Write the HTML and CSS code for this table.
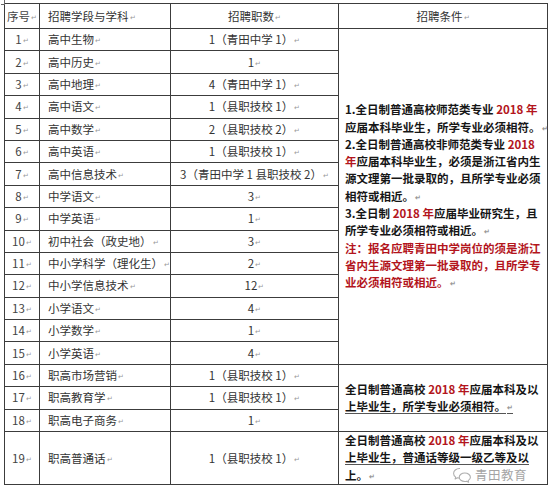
FILE: index.html
```html
<!DOCTYPE html>
<html lang="zh">
<head>
<meta charset="utf-8">
<link rel="stylesheet" href="styles.css">
</head>
<body>
<div class="page">
  <span class="handle"></span>
  <table class="grid">
    <colgroup>
      <col class="c1"><col class="c2"><col class="c3"><col class="c4">
    </colgroup>
    <tr class="head">
      <td class="num">序号<span class="pm">↵</span></td>
      <td class="subj">招聘学段与学科<span class="pm">↵</span></td>
      <td class="cnt">招聘职数<span class="pm">↵</span></td>
      <td class="cnt">招聘条件<span class="pm">↵</span></td>
    </tr>
    <tr>
      <td class="num">1<span class="pm">↵</span></td>
      <td class="subj">高中生物<span class="pm">↵</span></td>
      <td class="cnt">1（青田中学 1）<span class="pm">↵</span></td>
      <td class="cond" rowspan="15">
        <div class="ln">1.全日制普通高校师范类专业 <span class="red">2018 年</span></div>
        <div class="ln">应届本科毕业生，所学专业必须相符。<span class="pm">↵</span></div>
        <div class="ln">2.全日制普通高校非师范类专业 <span class="red">2018</span></div>
        <div class="ln"><span class="red">年</span>应届本科毕业生，必须是浙江省内生</div>
        <div class="ln">源文理第一批录取的，且所学专业必须</div>
        <div class="ln">相符或相近。<span class="pm">↵</span></div>
        <div class="ln">3.全日制 <span class="red">2018 年</span>应届毕业研究生，且</div>
        <div class="ln">所学专业必须相符或相近。<span class="pm">↵</span></div>
        <div class="ln red">注：报名应聘青田中学岗位的须是浙江</div>
        <div class="ln red">省内生源文理第一批录取的，且所学专</div>
        <div class="ln red">业必须相符或相近。<span class="pm">↵</span></div>
      </td>
    </tr>
    <tr><td class="num">2<span class="pm">↵</span></td><td class="subj">高中历史<span class="pm">↵</span></td><td class="cnt">1<span class="pm">↵</span></td></tr>
    <tr><td class="num">3<span class="pm">↵</span></td><td class="subj">高中地理<span class="pm">↵</span></td><td class="cnt">4（青田中学 1）<span class="pm">↵</span></td></tr>
    <tr><td class="num">4<span class="pm">↵</span></td><td class="subj">高中语文<span class="pm">↵</span></td><td class="cnt">1（县职技校 1）<span class="pm">↵</span></td></tr>
    <tr><td class="num">5<span class="pm">↵</span></td><td class="subj">高中数学<span class="pm">↵</span></td><td class="cnt">2（县职技校 2）<span class="pm">↵</span></td></tr>
    <tr><td class="num">6<span class="pm">↵</span></td><td class="subj">高中英语<span class="pm">↵</span></td><td class="cnt">1（县职技校 1）<span class="pm">↵</span></td></tr>
    <tr><td class="num">7<span class="pm">↵</span></td><td class="subj">高中信息技术<span class="pm">↵</span></td><td class="cnt">3（青田中学 1 县职技校 2）<span class="pm">↵</span></td></tr>
    <tr><td class="num">8<span class="pm">↵</span></td><td class="subj">中学语文<span class="pm">↵</span></td><td class="cnt">3<span class="pm">↵</span></td></tr>
    <tr><td class="num">9<span class="pm">↵</span></td><td class="subj">中学英语<span class="pm">↵</span></td><td class="cnt">1<span class="pm">↵</span></td></tr>
    <tr><td class="num">10<span class="pm">↵</span></td><td class="subj">初中社会（政史地）<span class="pm">↵</span></td><td class="cnt">3<span class="pm">↵</span></td></tr>
    <tr><td class="num">11<span class="pm">↵</span></td><td class="subj">中小学科学（理化生）<span class="pm">↵</span></td><td class="cnt">2<span class="pm">↵</span></td></tr>
    <tr><td class="num">12<span class="pm">↵</span></td><td class="subj">中小学信息技术<span class="pm">↵</span></td><td class="cnt">12<span class="pm">↵</span></td></tr>
    <tr><td class="num">13<span class="pm">↵</span></td><td class="subj">小学语文<span class="pm">↵</span></td><td class="cnt">4<span class="pm">↵</span></td></tr>
    <tr><td class="num">14<span class="pm">↵</span></td><td class="subj">小学数学<span class="pm">↵</span></td><td class="cnt">1<span class="pm">↵</span></td></tr>
    <tr><td class="num">15<span class="pm">↵</span></td><td class="subj">小学英语<span class="pm">↵</span></td><td class="cnt">4<span class="pm">↵</span></td></tr>
    <tr>
      <td class="num">16<span class="pm">↵</span></td><td class="subj">职高市场营销<span class="pm">↵</span></td><td class="cnt">1（县职技校 1）<span class="pm">↵</span></td>
      <td class="cond" rowspan="3">
        <div class="ln">全日制普通高校 <span class="red">2018 年</span>应届本科及以</div>
        <div class="ln ul">上毕业生，所学专业必须相符。<span class="pm">↵</span></div>
      </td>
    </tr>
    <tr><td class="num">17<span class="pm">↵</span></td><td class="subj">职高教育学<span class="pm">↵</span></td><td class="cnt">1（县职技校 1）<span class="pm">↵</span></td></tr>
    <tr><td class="num">18<span class="pm">↵</span></td><td class="subj">职高电子商务<span class="pm">↵</span></td><td class="cnt">1<span class="pm">↵</span></td></tr>
    <tr class="tall">
      <td class="num">19<span class="pm">↵</span></td><td class="subj">职高普通话<span class="pm">↵</span></td><td class="cnt">1（县职技校 1）<span class="pm">↵</span></td>
      <td class="cond">
        <div class="ln">全日制普通高校 <span class="red">2018 年</span>应届本科及以</div>
        <div class="ln ul">上毕业生，普通话等级一级乙等及以</div>
        <div class="ln">上。<span class="pm">↵</span></div>
      </td>
    </tr>
  </table>
  <div class="watermark">
    <svg class="wm-icon" viewBox="0 0 24 20" width="20" height="16" aria-hidden="true">
      <path d="M9 2C4.6 2 1.5 4.7 1.5 8c0 1.9 1 3.5 2.6 4.6L3.4 15l2.9-1.5c.9.3 1.8.4 2.7.4" fill="none" stroke="#9a9a9a" stroke-width="1.3" stroke-linecap="round" stroke-linejoin="round"/>
      <path d="M15.5 7.5c-3.9 0-7 2.4-7 5.3s3.1 5.3 7 5.3c.8 0 1.6-.1 2.3-.3l2.5 1.3-.6-2.1c1.7-1 2.8-2.5 2.8-4.2 0-2.9-3.1-5.3-7-5.3z" fill="none" stroke="#9a9a9a" stroke-width="1.3" stroke-linejoin="round"/>
    </svg>
    <span class="wm-text">青田教育</span>
  </div>
</div>
</body>
</html>
```

FILE: styles.css
```css
html, body {
  margin: 0;
  padding: 0;
  background: #ffffff;
}

.page {
  position: relative;
  width: 550px;
  height: 489px;
  padding: 3px 0 0 4px;
  box-sizing: border-box;
  font-family: "Noto Sans CJK SC", "Noto Sans", sans-serif;
}

.handle {
  position: absolute;
  left: 1px;
  top: 0;
  width: 3px;
  height: 4px;
  border-right: 1px solid #666;
  border-bottom: 1px solid #666;
}

.grid {
  border-collapse: collapse;
  table-layout: fixed;
  width: 543px;
  font-size: 11.5px;
  color: #333;
}

.c1 { width: 35px; }
.c2 { width: 131px; }
.c3 { width: 168px; }
.c4 { width: 209px; }

.grid td {
  border: 1px solid #3c3c3c;
  padding: 0;
  height: 21.4px;
  line-height: 14px;
  white-space: nowrap;
  vertical-align: middle;
}

.grid tr.head td {
  height: 24px;
}

.grid tr.tall td {
  height: 52px;
}

.num {
  text-align: center;
  color: #444;
}

.subj {
  padding-left: 8px !important;
  color: #333;
}

.cnt {
  text-align: center;
  color: #333;
}

.pm {
  font-size: 7px;
  color: #999;
  margin-left: 1px;
  vertical-align: 1px;
}

.grid td.cond {
  padding-left: 6px;
  vertical-align: middle;
  font-weight: bold;
  color: #161616;
  line-height: 17.3px;
}

.ln {
  white-space: nowrap;
  height: 17.3px;
}

.red {
  color: #b3151c;
}

.ul {
  text-decoration: underline;
  text-decoration-color: #555;
  text-underline-offset: 2px;
}

.watermark {
  position: absolute;
  left: 452px;
  top: 467px;
  display: flex;
  align-items: center;
  gap: 3px;
  opacity: 0.8;
}

.wm-text {
  font-size: 12.5px;
  line-height: 14px;
  color: #8e8e8e;
  letter-spacing: 0.5px;
}
```
